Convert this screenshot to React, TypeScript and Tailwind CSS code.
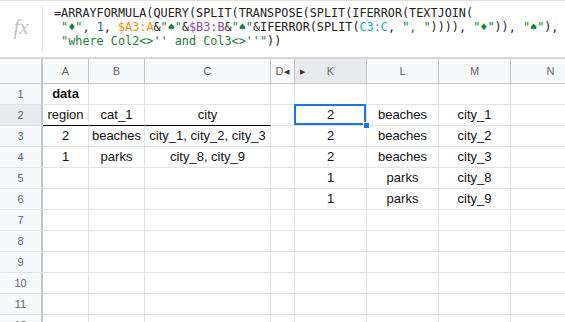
import React from "react";

const cols = [
    { key: "A", w: "w-[46px]" },
    { key: "B", w: "w-[56px]" },
    { key: "C", w: "w-[126px]" },
    { key: "D", w: "w-[24px]" },
    { key: "K", w: "w-[72px]" },
    { key: "L", w: "w-[72px]" },
    { key: "M", w: "w-[72px]" },
    { key: "N", w: "w-[80px]" },
];

// row -> cells, in column order A B C D K L M N
const data: Record<number, string[]> = {
    1: ["data"],
    2: ["region", "cat_1", "city", "", "2", "beaches", "city_1"],
    3: ["2", "beaches", "city_1, city_2, city_3", "", "2", "beaches", "city_2"],
    4: ["1", "parks", "city_8, city_9", "", "2", "beaches", "city_3"],
    5: ["", "", "", "", "1", "parks", "city_8"],
    6: ["", "", "", "", "1", "parks", "city_9"],
};

function FormulaBar() {
    const g = "text-[#188038]";
    return (
        <div className="flex h-[59px] border-t border-b-2 border-t-[#e0e0e0] border-b-[#d6d6d6] bg-white">
            <div className="flex w-[42px] items-center justify-center">
                <span className="font-['Liberation_Serif',serif] text-[21px] italic text-[#c2c2c2] -mt-[2px]">fx</span>
            </div>
            <div className="my-[5px] border-r border-[#e3e3e3]" />
            <div className="pl-[11px] pt-[5px] font-['DejaVu_Sans_Mono',monospace] text-[11.8px] leading-[14px] text-[#222] whitespace-pre">
                <div>=ARRAYFORMULA(QUERY(SPLIT(TRANSPOSE(SPLIT(IFERROR(TEXTJOIN(</div>
                <div>
                    {" "}
                    <span className={g}>"♦"</span>, <span className="text-[#1155cc]">1</span>,{" "}
                    <span className="text-[#f09300]">$A3:A</span>&amp;<span className={g}>"♠"</span>&amp;
                    <span className="text-[#8e44ad]">$B3:B</span>&amp;<span className={g}>"♠"</span>&amp;IFERROR(SPLIT(
                    <span className="text-[#11a9cc]">C3:C</span>, <span className={g}>", "</span>)))),{" "}
                    <span className={g}>"♦"</span>)), <span className={g}>"♠"</span>),
                </div>
                <div>
                    {" "}
                    <span className={g}>"where Col2&lt;&gt;'' and Col3&lt;&gt;''"</span>))
                </div>
            </div>
        </div>
    );
}

function HeaderRow() {
    return (
        <div className="flex h-[25px] border-b border-[#c4c4c4] bg-[#f8f9fa] text-[11px] text-[#666]">
            <div className="w-[43px] shrink-0 border-r-[2px] border-[#c4c4c4]" />
            {cols.map((c) => (
                <div
                    key={c.key}
                    className={`${c.w} relative flex shrink-0 items-center justify-center border-r border-[#c4c4c4] ${
                        c.key === "K" ? "bg-[#e8eaed]" : ""
                    }`}
                >
                    {c.key === "D" && (
                        <span className="flex items-center">
                            D<span className="ml-[1px] text-[7px] leading-none text-[#333]">◀</span>
                        </span>
                    )}
                    {c.key === "K" && (
                        <>
                            <span className="absolute left-[5px] text-[7px] leading-none text-[#333]">▶</span>
                            K
                        </>
                    )}
                    {c.key !== "D" && c.key !== "K" && c.key}
                </div>
            ))}
        </div>
    );
}

function Row({ n }: { n: number }) {
    const cells = data[n] || [];
    return (
        <div className="flex h-[21px] text-[13px] text-[#111]">
            <div
                className={`flex w-[43px] shrink-0 items-center justify-center border-r-[2px] border-b border-r-[#c4c4c4] border-b-[#e2e3e3] text-[11px] text-[#666] ${
                    n === 2 ? "bg-[#e8eaed]" : "bg-[#f8f9fa]"
                }`}
            >
                {n}
            </div>
            {cols.map((c, i) => {
                const v = cells[i] || "";
                const underline = n === 2 && i < 3;
                const selected = n === 2 && c.key === "K";
                return (
                    <div
                        key={c.key}
                        className={`${c.w} relative flex shrink-0 items-center justify-center whitespace-nowrap border-r border-b border-r-[#e2e3e3] ${
                            underline ? "border-b-[#000]" : "border-b-[#e2e3e3]"
                        } ${n === 1 && i === 0 ? "font-bold" : ""}`}
                    >
                        {v}
                        {selected && (
                            <>
                                <div className="absolute -top-[1px] -left-[1px] right-0 bottom-0 border-2 border-[#1a73e8]" />
                                <div className="absolute -right-[4px] -bottom-[4px] z-10 h-[7px] w-[7px] border border-white bg-[#1a73e8]" />
                            </>
                        )}
                    </div>
                );
            })}
        </div>
    );
}

export default function App() {
    const rows = Array.from({ length: 12 }, (_, i) => i + 1);
    return (
        <div className="h-[322px] w-[565px] overflow-hidden bg-white font-['Liberation_Sans',Arial,sans-serif]">
            <FormulaBar />
            <HeaderRow />
            {rows.map((n) => (
                <Row key={n} n={n} />
            ))}
        </div>
    );
}
